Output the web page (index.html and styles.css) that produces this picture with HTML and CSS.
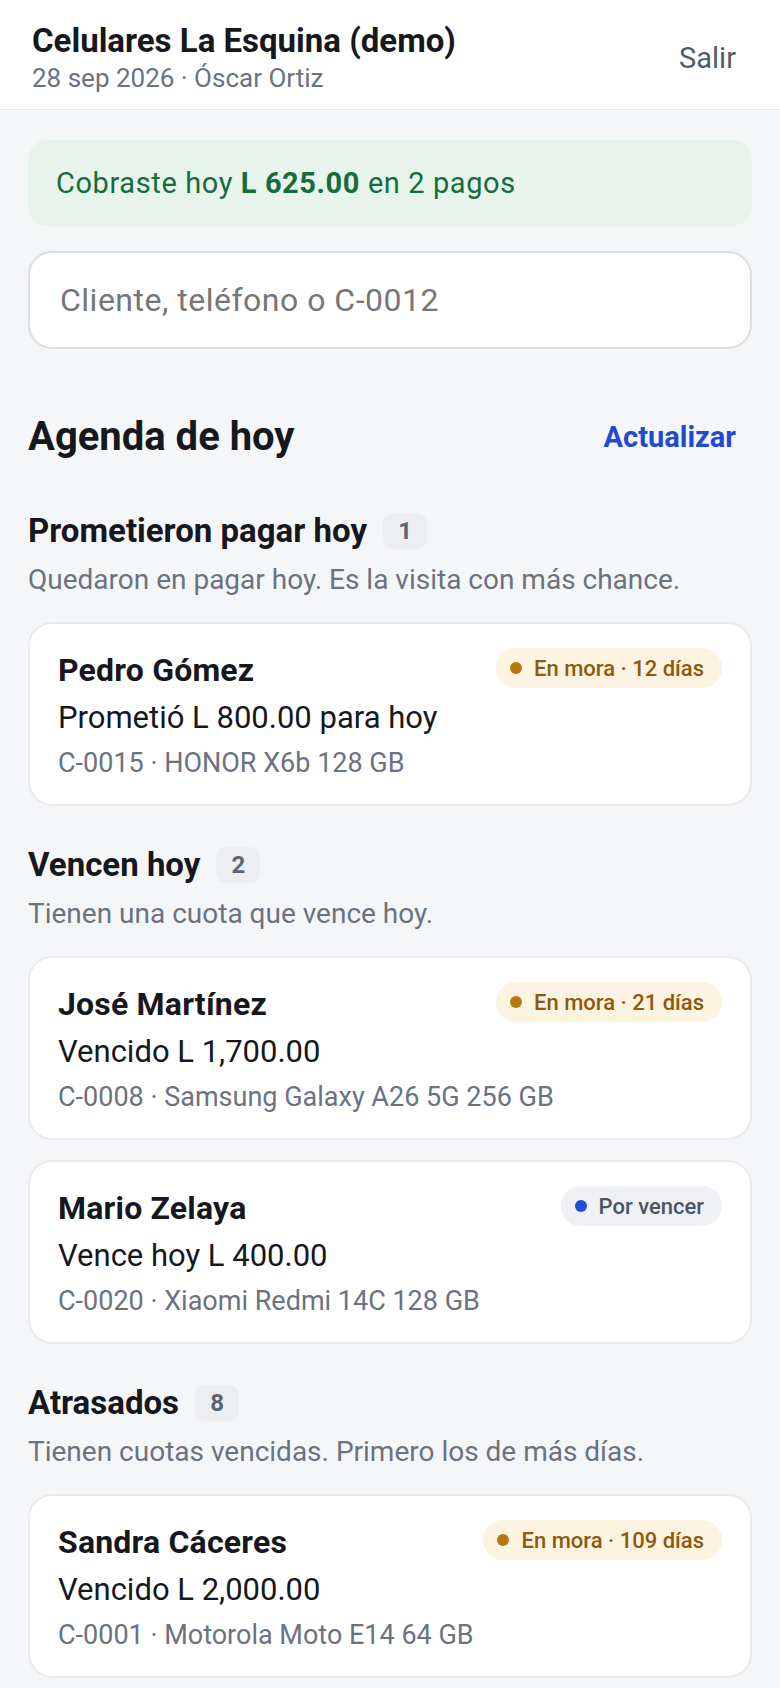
FILE: index.html
```html
<!DOCTYPE html>
<html lang="es">
<head>
  <meta charset="UTF-8">
  <meta name="viewport" content="width=device-width, initial-scale=1.0">
  <title>Agenda de hoy - Celulares La Esquina</title>
  <link rel="stylesheet" href="styles.css">
</head>
<body>
  <header class="topbar">
    <div class="topbar-info">
      <h1 class="shop-name">Celulares La Esquina (demo)</h1>
      <p class="shop-meta">28 sep 2026 · Óscar Ortiz</p>
    </div>
    <button class="btn-link btn-salir" type="button">Salir</button>
  </header>

  <main class="page">
    <div class="cobro-banner">Cobraste hoy <strong>L 625.00</strong> en 2 pagos</div>

    <input class="search" type="text" placeholder="Cliente, teléfono o C-0012">

    <div class="agenda-head">
      <h2>Agenda de hoy</h2>
      <button class="btn-link btn-actualizar" type="button">Actualizar</button>
    </div>

    <section class="grupo">
      <div class="grupo-head">
        <h3>Prometieron pagar hoy</h3>
        <span class="count">1</span>
      </div>
      <p class="grupo-desc">Quedaron en pagar hoy. Es la visita con más chance.</p>
      <div class="cards">
        <article class="card">
          <div class="card-top">
            <span class="card-name">Pedro Gómez</span>
            <span class="estado estado-mora"><i class="dot"></i>En mora · 12 días</span>
          </div>
          <p class="card-monto">Prometió L 800.00 para hoy</p>
          <p class="card-meta">C-0015 · HONOR X6b 128 GB</p>
        </article>
      </div>
    </section>

    <section class="grupo">
      <div class="grupo-head">
        <h3>Vencen hoy</h3>
        <span class="count">2</span>
      </div>
      <p class="grupo-desc">Tienen una cuota que vence hoy.</p>
      <div class="cards">
        <article class="card">
          <div class="card-top">
            <span class="card-name">José Martínez</span>
            <span class="estado estado-mora"><i class="dot"></i>En mora · 21 días</span>
          </div>
          <p class="card-monto">Vencido L 1,700.00</p>
          <p class="card-meta">C-0008 · Samsung Galaxy A26 5G 256 GB</p>
        </article>
        <article class="card">
          <div class="card-top">
            <span class="card-name">Mario Zelaya</span>
            <span class="estado estado-vence"><i class="dot"></i>Por vencer</span>
          </div>
          <p class="card-monto">Vence hoy L 400.00</p>
          <p class="card-meta">C-0020 · Xiaomi Redmi 14C 128 GB</p>
        </article>
      </div>
    </section>

    <section class="grupo">
      <div class="grupo-head">
        <h3>Atrasados</h3>
        <span class="count">8</span>
      </div>
      <p class="grupo-desc">Tienen cuotas vencidas. Primero los de más días.</p>
      <div class="cards">
        <article class="card">
          <div class="card-top">
            <span class="card-name">Sandra Cáceres</span>
            <span class="estado estado-mora"><i class="dot"></i>En mora · 109 días</span>
          </div>
          <p class="card-monto">Vencido L 2,000.00</p>
          <p class="card-meta">C-0001 · Motorola Moto E14 64 GB</p>
        </article>
      </div>
    </section>
  </main>
</body>
</html>
```

FILE: styles.css
```css
body {
  margin: 0;
  font-family: Roboto, 'Liberation Sans', sans-serif;
  background-color: #f5f6f8;
  color: #111827;
}
h1, h2, h3, p {
  margin: 0;
}
button {
  font-family: inherit;
  background: none;
  border: none;
  cursor: pointer;
}

/* barra superior */
.topbar {
  display: flex;
  justify-content: space-between;
  align-items: center;
  padding: 20px 32px 15px;
  background-color: white;
  border-bottom: 1px solid #e5e7eb;
}
.shop-name {
  font-size: 33px;
  line-height: 42px;
  font-weight: 700;
  color: #16181d;
}
.shop-meta {
  font-size: 26px;
  line-height: 32px;
  color: #6b7280;
}
.btn-salir {
  font-size: 29px;
  font-weight: 400;
  color: #515b69;
  padding: 8px 12px;
  margin-top: 2px;
}

.page {
  padding: 30px 28px 10px;
}

.cobro-banner {
  padding: 24px 28px;
  font-size: 29px;
  line-height: 38px;
  letter-spacing: 0.6px;
  color: #176b3c;
  background-color: #e6f4ec;
  border-radius: 20px;
}
.cobro-banner strong {
  font-weight: 700;
}

.search {
  display: block;
  width: 100%;
  height: 98px;
  margin-top: 25px;
  padding: 0 30px;
  box-sizing: border-box;
  font-family: inherit;
  font-size: 32px;
  letter-spacing: 0.5px;
  color: #111827;
  background-color: white;
  border: 2px solid #dcdfe4;
  border-radius: 24px;
  outline: none;
}
.search::placeholder {
  color: #767676;
}

.agenda-head {
  display: flex;
  justify-content: space-between;
  align-items: center;
  margin-top: 64px;
}
.agenda-head h2 {
  font-size: 40px;
  line-height: 48px;
  font-weight: 700;
  color: #16181d;
}
.btn-actualizar {
  font-size: 29px;
  line-height: 36px;
  font-weight: 700;
  color: #2149d1;
  padding: 6px 16px;
}

/* grupos de la agenda */
.grupo {
  margin-top: 39px;
}
.agenda-head + .grupo {
  margin-top: 50px;
}
.grupo-head {
  display: flex;
  align-items: center;
  gap: 16px;
}
.grupo-head h3 {
  font-size: 33px;
  line-height: 40px;
  font-weight: 700;
  color: #16181d;
}
.count {
  min-width: 44px;
  height: 36px;
  padding: 0 12px;
  box-sizing: border-box;
  display: inline-flex;
  align-items: center;
  justify-content: center;
  font-size: 24px;
  font-weight: 700;
  color: #5b6472;
  background-color: #eceef2;
  border-radius: 10px;
}
.grupo-desc {
  margin-top: 10px;
  font-size: 28px;
  line-height: 38px;
  color: #6b7280;
}

.cards {
  display: flex;
  flex-direction: column;
  gap: 20px;
  margin-top: 23px;
}
.card {
  padding: 24px 28px;
  background-color: white;
  border: 2px solid #e9ebef;
  border-radius: 24px;
}
.card-top {
  display: flex;
  justify-content: space-between;
  align-items: center;
  height: 40px;
}
.card-name {
  font-size: 32px;
  line-height: 40px;
  font-weight: 700;
  letter-spacing: 0.2px;
  color: #16181d;
  padding-top: 3px;
}
.card-monto {
  margin-top: 10px;
  font-size: 31px;
  line-height: 40px;
  color: #16181d;
}
.card-meta {
  margin-top: 8px;
  font-size: 27px;
  line-height: 34px;
  color: #6b7280;
}

/* etiquetas de estado */
.estado {
  display: inline-flex;
  align-items: center;
  gap: 12px;
  height: 40px;
  padding: 0 18px 0 14px;
  font-size: 22px;
  font-weight: 500;
  border-radius: 20px;
  flex-shrink: 0;
}
.estado .dot {
  width: 12px;
  height: 12px;
  border-radius: 50%;
}
.estado-mora {
  color: #8d5a0b;
  background-color: #fdf3e1;
}
.estado-mora .dot {
  background-color: #b7780f;
}
.estado-vence {
  color: #4b5563;
  background-color: #eef0f4;
}
.estado-vence .dot {
  background-color: #1d4ed8;
}
```
